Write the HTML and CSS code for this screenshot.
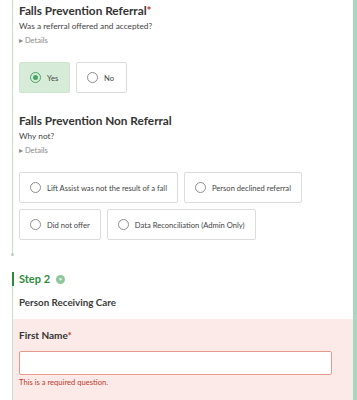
FILE: index.html
```html
<!DOCTYPE html>
<html lang="en">
<head>
    <meta charset="UTF-8">
    <meta name="viewport" content="width=device-width, initial-scale=1.0">
    <title>Falls Prevention</title>
    <link rel="stylesheet" href="styles.css">
</head>
<body>
    <div class="page">
        <div class="step step-one">
            <div class="field">
                <h3 class="question">Falls Prevention Referral<span class="req">*</span></h3>
                <p class="hint">Was a referral offered and accepted?</p>
                <div class="details">&#9656; Details</div>
                <div class="choices">
                    <label class="choice selected"><span class="radio"></span>Yes</label>
                    <label class="choice"><span class="radio"></span>No</label>
                </div>
            </div>

            <div class="field">
                <h3 class="question">Falls Prevention Non Referral</h3>
                <p class="hint">Why not?</p>
                <div class="details">&#9656; Details</div>
                <div class="choices">
                    <label class="choice"><span class="radio"></span>Lift Assist was not the result of a fall</label>
                    <label class="choice"><span class="radio"></span>Person declined referral</label>
                    <label class="choice"><span class="radio"></span>Did not offer</label>
                    <label class="choice"><span class="radio"></span>Data Reconciliation (Admin Only)</label>
                </div>
            </div>
            <span class="end-dot"></span>
        </div>

        <div class="step step-two">
            <div class="step-head">
                <h2>Step 2</h2>
                <span class="toggle">
                    <svg width="9" height="9" viewBox="0 0 10 10"><circle cx="5" cy="5" r="5" fill="#8fc69b"/><path d="M3 4 L7 4 L5 6.4 Z" fill="#fff"/></svg>
                </span>
            </div>
            <div class="step-title">Person Receiving Care</div>

            <div class="field error">
                <h3 class="question small">First Name<span class="req">*</span></h3>
                <input type="text" class="text-input">
                <div class="error-text">This is a required question.</div>
            </div>
        </div>
    </div>
</body>
</html>
```

FILE: styles.css
```css
body {
    margin: 0;
    font-family: Lato, "Open Sans", sans-serif;
    color: #3a3a3a;
    background: #fff;
}

.page {
    width: 353px;
    height: 400px;
    border-right: 4px solid #a9d6bf;
    overflow: hidden;
}

.step {
    margin-left: 12px;
    border-left: 1px solid #c6e0c9;
    position: relative;
}

.step-one {
    padding-top: 4px;
    padding-bottom: 15px;
}

.end-dot {
    position: absolute;
    left: -2px;
    bottom: -1px;
    width: 3px;
    height: 3px;
    border-radius: 50%;
    background: #b5d6b9;
}

.field {
    padding: 0 0 0 6px;
}

.field + .field {
    margin-top: 21px;
}

.question {
    margin: 0;
    font-size: 11.8px;
    line-height: 14px;
    font-weight: 700;
    color: #333;
}

.question.small {
    font-size: 10px;
}

.req {
    color: #c0392b;
}

.hint {
    margin: 2px 0 0;
    font-size: 8.3px;
    line-height: 12px;
    color: #444;
}

.details {
    margin-top: 4px;
    font-size: 7.5px;
    line-height: 10px;
    color: #8a8a8a;
}

.choices {
    display: flex;
    flex-wrap: wrap;
    gap: 6px;
    margin-top: 16px;
    padding-right: 40px;
}

.choice {
    display: flex;
    align-items: center;
    gap: 6px;
    box-sizing: border-box;
    min-width: 51px;
    height: 31px;
    padding: 0 10px;
    border: 1px solid #dcdcdc;
    border-radius: 2px;
    font-size: 7.6px;
    color: #444;
    background: #fff;
}

.choice.selected {
    background: #d7ecd8;
    border-color: #cfe5d0;
}

.radio {
    width: 11px;
    height: 11px;
    border: 1px solid #8d8d8d;
    border-radius: 50%;
    box-sizing: border-box;
    position: relative;
    flex: none;
}

.selected .radio {
    border: 1.5px solid #4aa464;
}

.selected .radio::after {
    content: "";
    position: absolute;
    left: 1.5px;
    top: 1.5px;
    width: 5px;
    height: 5px;
    border-radius: 50%;
    background: #4aa464;
}

.step-two {
    margin-top: 17px;
    padding-bottom: 30px;
}

.step-head {
    display: flex;
    align-items: center;
    gap: 6px;
    margin-left: -1px;
    padding-left: 5px;
    border-left: 2px solid #2e8b3e;
}

.step-head h2 {
    margin: 0;
    font-size: 11px;
    font-weight: 700;
    color: #2e8b3e;
    line-height: 14px;
}

.toggle {
    display: flex;
}

.step-title {
    margin: 10px 0 0;
    padding-left: 6px;
    font-size: 9.8px;
    line-height: 12px;
    font-weight: 700;
    color: #3a3a3a;
}

.field.error {
    margin-top: 11px;
    padding: 9px 21px 14px 6px;
    background: #fbeae8;
}

.text-input {
    display: block;
    width: 100%;
    height: 24px;
    margin-top: 9px;
    box-sizing: border-box;
    border: 1px solid #e69a8c;
    border-radius: 2px;
    background: #fff;
}

.error-text {
    margin-top: 2px;
    font-size: 7.6px;
    line-height: 10px;
    color: #c0392b;
}
```
